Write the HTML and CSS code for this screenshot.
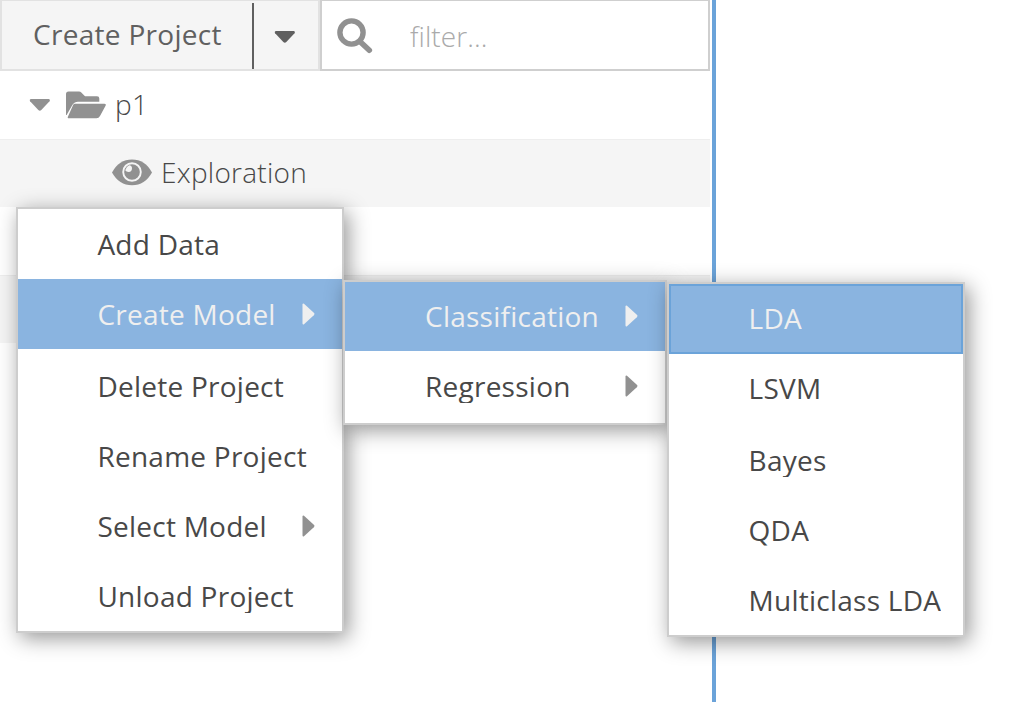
FILE: index.html
```
<!DOCTYPE html>
<html lang="en">
<head>
<meta charset="utf-8">
<title>Projects</title>
<link rel="stylesheet" href="styles.css">
</head>
<body>
<div class="app">
  <aside class="panel">
    <header class="toolbar">
      <button class="create">Create Project</button>
      <button class="more" aria-label="More"><svg width="22" height="13" viewBox="0 0 22 13"><path d="M1.6 0H20q1.8.8.5 2.2L12.3 11q-1.5 1.4-3 0L1.100 2.200Q0 .8 1.600 0Z"/></svg></button>
      <label class="filter">
        <svg width="36" height="36" viewBox="0 0 36 36"><circle cx="14.500" cy="14.500" r="11.600" fill="none" stroke="#919191" stroke-width="5.400"/><path d="M24 24.500l8.300 7.700" stroke="#919191" stroke-width="5.600" stroke-linecap="round"/></svg>
        <input type="text" placeholder="filter...">
      </label>
    </header>
    <ul class="tree">
      <li class="row root">
        <svg class="twisty" width="22" height="13" viewBox="0 0 22 13"><path d="M1.600 0H20q1.800.8.5 2.200L12.300 11q-1.500 1.400-3 0L1.100 2.200Q0 .8 1.600 0Z"/></svg>
        <svg class="folder" width="41" height="28" viewBox="0 0 41 28"><path d="M0 24V3Q0 .5 2.500.5H13q1.500 0 2.300 1L19 5.200H31q2.300 0 2.300 2.300v3.300H12q-3.500 0-5.500 3L.6 24ZM9 12.800H38.500q2 0 1.200 1.800L34 25q-1.200 2.300-3.500 2.300H3Q1 27.300 2 25.500L7 14.200q.6-1.400 2-1.400Z"/></svg>
        <span>p1</span>
      </li>
      <li class="row child">
        <svg class="eye" width="40" height="27" viewBox="0 0 40 27"><path fill="#919191" d="M0 13.500Q7 .5 20 .5T40 13.500Q33 26.300 20 26.300T0 13.500Z"/><circle cx="20" cy="13" r="8.800" fill="#919191" stroke="#f5f5f5" stroke-width="1.900"/><path d="M13.200 11.200q.8-3.500 4-5 2.800.3 2.800 3.100 0 3.600-3.400 3.600-2.400 0-3.400-1.700Z" fill="#f5f5f5"/></svg>
        <span>Exploration</span>
      </li>
      <li class="row"></li>
      <li class="row"></li>
    </ul>
  </aside>

  <nav class="menu menu-project">
    <div class="item"><span>Add Data</span></div>
    <div class="item active"><span>Create Model</span><svg width="13" height="22" viewBox="0 0 13 22"><path d="M.5 1.500Q.7.2 2 .8L11.800 9.800q1.300 1.200 0 2.400L2 21.200Q.7 21.800.5 20.500Z"/></svg></div>
    <div class="item"><span>Delete Project</span></div>
    <div class="item"><span>Rename Project</span></div>
    <div class="item"><span>Select Model</span><svg width="13" height="22" viewBox="0 0 13 22"><path d="M.5 1.500Q.7.2 2 .8L11.800 9.800q1.300 1.200 0 2.400L2 21.200Q.7 21.800.5 20.500Z"/></svg></div>
    <div class="item"><span>Unload Project</span></div>
  </nav>
  <nav class="menu menu-type">
    <div class="item active"><span>Classification</span><svg width="13" height="22" viewBox="0 0 13 22"><path d="M.5 1.500Q.7.2 2 .8L11.800 9.800q1.300 1.200 0 2.400L2 21.200Q.7 21.800.5 20.500Z"/></svg></div>
    <div class="item"><span>Regression</span><svg width="13" height="22" viewBox="0 0 13 22"><path d="M.5 1.500Q.7.2 2 .8L11.800 9.800q1.300 1.200 0 2.400L2 21.200Q.7 21.800.5 20.500Z"/></svg></div>
  </nav>
  <nav class="menu menu-algorithm">
    <div class="item active focused"><span>LDA</span></div>
    <div class="item"><span>LSVM</span></div>
    <div class="item late"><span>Bayes</span></div>
    <div class="item"><span>QDA</span></div>
    <div class="item"><span>Multiclass LDA</span></div>
  </nav>
</div>
</body>
</html>
```

FILE: styles.css
```
* { box-sizing: border-box; }
body { margin: 0; background: #fff; }
.app {
  position: relative;
  width: 1015px;
  height: 702px;
  overflow: hidden;
  font: 28px/34px "Open Sans", sans-serif;
  letter-spacing: .25px;
  color: #484848;
}
.panel {
  width: 716px;
  height: 702px;
  border-right: 4px solid #6ba3d9;
}
.toolbar { display: flex; height: 71px; width: 710px; }
.toolbar button {
  border: 0 solid #e2e2e2;
  background: #f5f5f5;
  font: inherit;
  letter-spacing: .3px;
  color: #606060;
  padding: 0;
  white-space: nowrap;
}
.toolbar .create {
  width: 252px;
  border-width: 1px 0 2px 2px;
  padding: 0 0 3px 31px;
  text-align: left;
}
.toolbar .more {
  width: 68px;
  border-width: 1px 2px 2px 0;
  display: flex;
  align-items: center;
  padding: 4px 0 0 22px;
  background: linear-gradient(#606060, #606060) 0 2px / 2px 66px no-repeat #f5f5f5;
}
.more svg { fill: #606060; }
.filter {
  flex: 1;
  display: flex;
  align-items: center;
  border: 2px solid #cfcfcf;
  border-top-width: 1px;
  padding: 1px 0 0 15px;
}
.filter input {
  width: 260px;
  margin-left: 37px;
  padding: 1px 0 0;
  border: 0;
  background: none;
  font: 300 28px/36px "Open Sans", sans-serif;
  letter-spacing: .1px;
}
.filter input::placeholder { color: #aaa; opacity: 1; }
.tree { list-style: none; margin: 0; padding: 0; width: 710px; font-weight: 300; }
.row { display: flex; align-items: center; height: 68px; }
.row:nth-child(even) { background: #f5f5f5; border-top: 1px solid #eee; }
.root { padding: 0 0 1px 29px; }
.child { padding: 0 0 3px 112px; }
.twisty, .folder { fill: #919191; }
.twisty { margin-top: 2px; }
.folder { margin-left: 15px; }
.root span { margin: 0 0 2px 8px; }
.child span { margin-left: 9px; }

.menu {
  position: absolute;
  border: 2px solid #cdcdcd;
  background: #fff;
  box-shadow: 4px 5px 20px rgba(0, 0, 0, .42);
}
.menu-project { left: 16px; top: 207px; width: 327.5px; height: 426px; }
.menu-type { left: 343px; top: 280px; width: 324px; height: 145px; }
.menu-algorithm { left: 667px; top: 282px; width: 298px; height: 355px; }
.item {
  display: flex;
  align-items: center;
  justify-content: space-between;
  height: 70px;
  padding: 0 26.5px 0 79.4px;
}
.menu-type .item { padding: 0 27px 1px 80px; height: 69px; }
.item span { overflow: hidden; white-space: nowrap; }
.menu-type .item + .item { height: 71px; padding-bottom: 2px; }
.menu-algorithm .item { padding: 0 0 2px 79.6px; }
.item svg { fill: #919191; flex: none; }
.active { background: #8ab4e0; color: #efefef; }
.active svg { fill: #efefef; }
.menu-algorithm .focused { border: 2px solid #6ba3d9; padding-left: 77.6px; }
.menu-project .active + .item, .late { margin-top: 2px; }
```
